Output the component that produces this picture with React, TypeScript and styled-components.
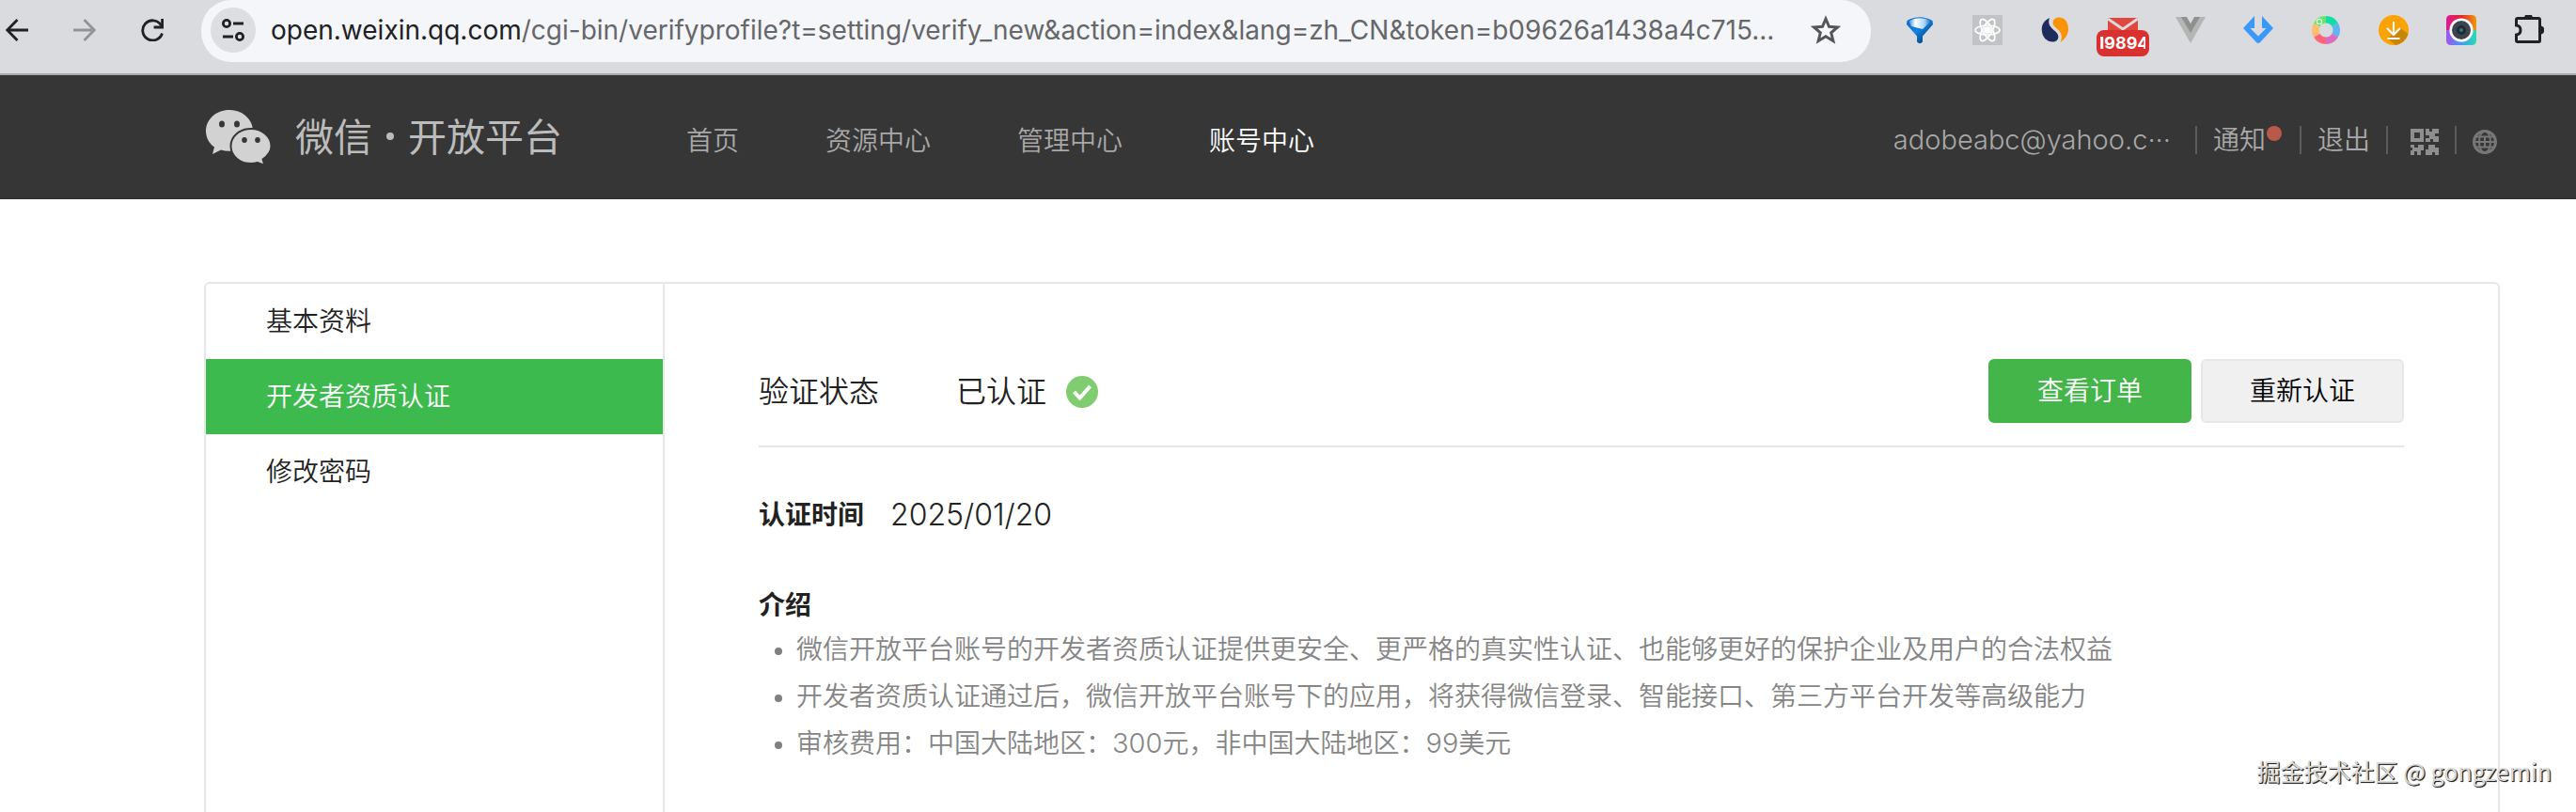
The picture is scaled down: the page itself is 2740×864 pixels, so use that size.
import React from 'react';
import styled, { createGlobalStyle } from 'styled-components';

const Global = createGlobalStyle`
  * { box-sizing: border-box; }
  html, body, #root { height: 100%; }
  body {
    margin: 0;
    background: #fff;
    font-family: Inter, "Noto Sans CJK SC", sans-serif;
    font-size: 28px;
    color: #222;
    overflow: hidden;
  }
  button, input { font: inherit; }
`;

const Page = styled.div`
  position: relative;
  min-height: 100%;
  display: flex;
  flex-direction: column;
`;

const Toolbar = styled.div`
  flex: none;
  height: 80px;
  display: flex;
  align-items: flex-start;
  background: #dadbdf;
  border-bottom: 2px solid #a9abae;
`;

const NavButtons = styled.div`
  display: flex;
  gap: 48px;
  padding: 20px 40px 0 6px;
`;

const IconButton = styled.button<{ $size?: number }>`
  display: block;
  flex: none;
  padding: 0;
  border: 0;
  background: none;
  width: ${(p) => p.$size ?? 24}px;
  height: ${(p) => p.$size ?? 24}px;
  svg { display: block; width: 100%; height: 100%; }
`;

const AddressBar = styled.div`
  flex: 1;
  min-width: 0;
  height: 66px;
  display: flex;
  align-items: center;
  padding: 0 32px 2px 10px;
  gap: 16px;
  background: #f5f6f9;
  border-radius: 32px;
`;

const SiteInfo = styled.button`
  flex: none;
  width: 48px;
  height: 48px;
  padding: 11px;
  border: 0;
  border-radius: 50%;
  background: #dddee1;
  svg { display: block; width: 26px; height: 26px; }
`;

const Url = styled.a`
  flex: 1;
  min-width: 0;
  white-space: nowrap;
  overflow: hidden;
  text-overflow: ellipsis;
  text-decoration: none;
  font-family: Inter, sans-serif;
  font-size: 28px;
  line-height: 40px;
  color: #66676a;
  b { font-weight: 400; color: #202124; }
`;

const Extensions = styled.div`
  flex: none;
  display: flex;
  gap: 40px;
  padding: 16px 34px 0 36px;
`;

const Badge = styled.span`
  position: absolute;
  left: -4px;
  top: 16px;
  width: 56px;
  height: 28px;
  padding: 0 4px;
  border-radius: 8px;
  background: #d93030;
  color: #fff;
  font: 700 18px/28px Inter, sans-serif;
`;

const BadgeText = styled.span`
  display: flex;
  justify-content: center;
  overflow: hidden;
`;

const BadgeHolder = styled.button`
  position: relative;
  flex: none;
  width: 48px;
  height: 32px;
  margin: 0 -8px;
  padding: 0 8px;
  border: 0;
  background: none;
  svg { display: block; }
`;

const Header = styled.header`
  flex: none;
  height: 132px;
  display: flex;
  align-items: center;
  padding: 0 84px 0 218px;
  background: #363636;
  color: #a8a8a8;
  font-weight: 350;
`;

const Brand = styled.a`
  display: flex;
  align-items: center;
  gap: 24px;
  color: #bcbcbc;
  font-size: 41px;
  font-weight: 400;
  line-height: 56px;
  white-space: nowrap;
  text-decoration: none;
  svg { display: block; width: 72px; height: 60px; }
`;

const Dot = styled.i`
  display: inline-block;
  width: 8px;
  height: 8px;
  margin: 0 15px;
  border-radius: 50%;
  background: #bcbcbc;
  vertical-align: 12px;
`;

const MainNav = styled.nav`
  display: flex;
  gap: 92px;
  margin-left: 132px;
  padding-top: 8px;
`;

const NavLink = styled.a<{ $active?: boolean }>`
  color: ${(p) => (p.$active ? '#fff' : '#a8a8a8')};
  line-height: 40px;
  text-decoration: none;
`;

const Account = styled.div`
  margin-left: auto;
  display: flex;
  align-items: center;
  padding-top: 6px;
  line-height: 40px;
`;

const Email = styled.span`
  font-size: 29px;
  font-weight: 300;
  margin-right: 26px;
`;

const Entry = styled.a`
  position: relative;
  display: flex;
  align-items: center;
  padding: 0 17px;
  height: 30px;
  border-left: 2px solid #5c5c5c;
  color: inherit;
  text-decoration: none;
  svg { display: block; }
`;

const NoticeEntry = styled(Entry)`
  padding-right: 36px;
`;

const QrEntry = styled(Entry)`
  padding: 4px 17px 0 24px;
`;

const LangEntry = styled(Entry)`
  padding: 4px 0 0 17px;
`;

const Unread = styled.i`
  position: absolute;
  right: 19px;
  top: 0;
  width: 16px;
  height: 16px;
  border-radius: 50%;
  background: #b8594a;
`;

const Panel = styled.main`
  flex: 1;
  display: flex;
  margin: 88px 81px 0 217px;
  border: 2px solid #e7e7e7;
  border-bottom: 0;
  border-radius: 6px 6px 0 0;
`;

const Side = styled.nav`
  flex: none;
  width: 488px;
  border-right: 2px solid #e7e7e7;
`;

const SideLink = styled.a<{ $active?: boolean }>`
  display: block;
  padding-left: 64px;
  line-height: 80px;
  font-weight: 350;
  text-decoration: none;
  color: ${(p) => (p.$active ? '#fff' : '#222')};
  background: ${(p) => (p.$active ? '#3dba4e' : 'none')};
`;

const Content = styled.section`
  flex: 1;
  min-width: 0;
  padding: 80px 100px 0;
`;

const StatusRow = styled.div`
  display: flex;
  align-items: center;
  padding-bottom: 24px;
  border-bottom: 2px solid #e7e7e7;
  font-size: 32px;
  font-weight: 350;
  line-height: 68px;
  svg { display: block; margin: 2px 0 0 20px; }
`;

const StatusText = styled.span`
  padding-top: 2px;
  line-height: 66px;
`;

const StatusValue = styled(StatusText)`
  margin-left: 82px;
`;

const Actions = styled.div`
  margin-left: auto;
  display: flex;
  gap: 10px;
`;

const ActionButton = styled.button<{ $primary?: boolean }>`
  width: 216px;
  height: 68px;
  padding: 0;
  font-size: 28px;
  line-height: 64px;
  border-radius: 6px;
  border: 2px solid ${(p) => (p.$primary ? '#44b549' : '#e7e7e7')};
  background: ${(p) => (p.$primary ? '#44b549' : '#f0f0f0')};
  color: ${(p) => (p.$primary ? '#fff' : '#000')};
`;

const TimeRow = styled.div`
  display: flex;
  gap: 28px;
  margin-top: 52px;
  line-height: 40px;
  b { font-weight: 700; }
  time { font-size: 32px; font-weight: 300; }
`;

const Title = styled.h2`
  margin: 56px 0 0;
  font-size: 28px;
  font-weight: 700;
  line-height: 40px;
`;

const Notes = styled.ul`
  margin: 2px 0 0;
  padding: 0;
  list-style: none;
  line-height: 50px;
  font-weight: 350;
  color: #858585;
  white-space: nowrap;
`;

const Note = styled.li`
  display: flex;
  align-items: center;
  gap: 15px;
  height: 50px;
  padding-left: 17px;
  &::before {
    content: "";
    width: 8px;
    height: 8px;
    margin-top: 4px;
    border-radius: 50%;
    background: #808080;
  }
`;

const Amount = styled.span`
  font-size: 29px;
  font-weight: 300;
`;

const Watermark = styled.div`
  position: absolute;
  right: 26px;
  bottom: 24px;
  font-family: "Noto Sans CJK SC", sans-serif;
  font-size: 25px;
  line-height: 40px;
  color: #dcdcdc;
  text-shadow: 1px 1px 1px #222, 1px 1px 0 #444;
`;

const Arrow = ({ back }: { back?: boolean }) => (
  <svg viewBox="0 0 24 24" fill="none" stroke={back ? '#202124' : '#929397'} strokeWidth="2.8">
    {back ? <path d="M24 12H2M12.500 1 1.800 12l10.700 11" /> : <path d="M0 12h22M11.500 1l10.700 11-10.700 11" />}
  </svg>
);

export default function App() {
  return (
    <Page>
      <Global />
      <Toolbar>
        <NavButtons>
          <IconButton aria-label="后退"><Arrow back /></IconButton>
          <IconButton aria-label="前进"><Arrow /></IconButton>
          <IconButton aria-label="刷新">
            <svg viewBox="0 0 24 24" fill="none" stroke="#202124" strokeWidth="2.8">
              <path d="M22.500 15.500A10.600 10.600 0 1 1 21 6.200L22.500 8.500" />
              <path d="M22.600 0v9h-9" />
            </svg>
          </IconButton>
        </NavButtons>
        <AddressBar>
          <SiteInfo aria-label="网站信息">
            <svg viewBox="0 0 26 26" fill="none" stroke="#202124" strokeWidth="2.800">
              <circle cx="6" cy="6" r="3.600" /><path d="M13 6h11M2 20h11" /><circle cx="20" cy="20" r="3.600" />
            </svg>
          </SiteInfo>
          <Url href="#"><b>open.weixin.qq.com</b>/cgi-bin/verifyprofile?t=setting/verify_new&amp;action=index&amp;lang=zh_CN&amp;token=b09626a1438a4c715...</Url>
          <IconButton $size={32} aria-label="收藏">
            <svg viewBox="0 0 32 32" fill="none" stroke="#55565a" strokeWidth="3">
              <path d="M16 4l3.500 8.300 9 .7-6.800 5.800 2.200 8.700-7.900-4.700-7.900 4.700 2.200-8.700L3.500 13l9-.7z" />
            </svg>
          </IconButton>
        </AddressBar>
        <Extensions>
          <IconButton $size={32} aria-label="扩展 1">
            <svg viewBox="0 0 32 32">
              <defs>
                <linearGradient id="gem" x1="0" x2="1" y1="0" y2="1"><stop offset="0" stopColor="#0a5ec0" /><stop offset=".45" stopColor="#1083e2" /><stop offset="1" stopColor="#032a5c" /></linearGradient>
                <linearGradient id="shine" x1="0" x2="1" y1="0" y2="0"><stop offset="0" stopColor="#1d86dc" /><stop offset=".3" stopColor="#fff" /><stop offset=".7" stopColor="#a9d6fa" /><stop offset="1" stopColor="#1667b8" /></linearGradient>
              </defs>
              <path d="M2.500 6Q16-1.500 29.500 6L30 10 19 22.500v6q-3 3.500-6 0v-6L2 10z" fill="url(#gem)" />
              <path d="M4 6.500Q16 0 28 6.500L19 15 7 12z" fill="url(#shine)" />
            </svg>
          </IconButton>
          <IconButton $size={32} aria-label="扩展 2">
            <svg viewBox="0 0 32 32" fill="none" stroke="#fff" strokeWidth="1.700">
              <path d="M0 0h32v32H0z" fill="#c2c3c6" stroke="none" />
              <ellipse cx="16" cy="16" rx="13" ry="5" /><ellipse cx="16" cy="16" rx="13" ry="5" transform="rotate(60 16 16)" /><ellipse cx="16" cy="16" rx="13" ry="5" transform="rotate(120 16 16)" />
              <circle cx="16" cy="16" r="3" fill="#fff" />
            </svg>
          </IconButton>
          <IconButton $size={32} aria-label="扩展 3">
            <svg viewBox="0 0 32 32">
              <path d="M10 3C4 6 1.500 10.500 1.800 16c.3 8 6 13 12.500 12.500 6-.8 6.500-7 2.500-10.500C11.500 13.500 7.500 10 10 3z" fill="#1f2b5b" />
              <path d="M14 6c2-5.500 16-5.500 16 9 0 6-4 11-8.500 14C24 24 23 19 19 15.500 15.500 12.500 12.500 10 14 6z" fill="#fb9307" />
            </svg>
          </IconButton>
          <BadgeHolder aria-label="邮件">
            <svg width="32" height="32" viewBox="0 0 32 32"><path d="M0 3h32v14H0z" fill="#e0483e" /><path d="M0 4l16 11L32 4" fill="none" stroke="#dadbdf" strokeWidth="3" /></svg>
            <Badge><BadgeText>19894</BadgeText></Badge>
          </BadgeHolder>
          <IconButton $size={32} aria-label="扩展 5">
            <svg viewBox="0 0 32 32"><path d="M0 2h32L16 30z" fill="#b4b6b6" /><path d="M6 2h6l4 7 4-7h6L16 19z" fill="#8f918f" /><path d="M12 2h8l-4 7z" fill="#dadbdf" /></svg>
          </IconButton>
          <IconButton $size={32} aria-label="扩展 6">
            <svg viewBox="0 0 32 32"><path d="M12 1v13H7.500l8.500 8.500 8.500-8.500H20V1l12 13-14 15q-2 2-4 0L0 14z" fill="#3b98fb" /></svg>
          </IconButton>
          <IconButton $size={32} aria-label="扩展 7">
            <svg viewBox="0 0 32 32" fill="none" strokeWidth="7.500">
              <path d="M16 4.800A11.200 11.200 0 0 1 25.700 10.400" stroke="#12dca8" /><path d="M25.700 10.400A11.200 11.200 0 0 1 25.700 21.600" stroke="#5fb4f2" />
              <path d="M25.700 21.600A11.200 11.200 0 0 1 16 27.200" stroke="#dc6cc0" /><path d="M16 27.200A11.200 11.200 0 0 1 6.300 21.600" stroke="#ff6478" />
              <path d="M6.300 21.600A11.200 11.200 0 0 1 6.300 10.400" stroke="#fbbd72" /><path d="M6.300 10.400A11.200 11.200 0 0 1 16 4.800" stroke="#66e56c" />
              <circle cx="9" cy="7" r="2.600" stroke="#e9ffe0" strokeWidth="1.200" />
            </svg>
          </IconButton>
          <IconButton $size={32} aria-label="下载">
            <svg viewBox="0 0 32 32"><circle cx="16" cy="16" r="16" fill="#fba305" /><path d="M23.500 14l8 6A16 16 0 0 1 18 31.900L9.500 25z" fill="#c78608" /><path d="M16 7v13.500M9 14l7 7 7-7M9.500 25h13" fill="none" stroke="#fff" strokeWidth="2" /></svg>
          </IconButton>
          <IconButton $size={32} aria-label="截图">
            <svg viewBox="0 0 32 32">
              <defs>
                <linearGradient id="cam" x1="0" x2="1" y1="0" y2="0"><stop offset="0" stopColor="#e0189a" /><stop offset=".5" stopColor="#e02828" /><stop offset="1" stopColor="#f09a10" /></linearGradient>
                <linearGradient id="cam2" x1="0" x2="1" y1="0" y2="0"><stop offset="0" stopColor="#a552ee" /><stop offset=".5" stopColor="#3d9cf4" /><stop offset="1" stopColor="#2ddcb0" /></linearGradient>
              </defs>
              <path d="M0 16V5q0-5 5-5h22q5 0 5 5v11z" fill="url(#cam)" /><path d="M0 16v11q0 5 5 5h22q5 0 5-5V16z" fill="url(#cam2)" />
              <circle cx="16" cy="16" r="11.300" fill="#3c4450" stroke="#fff" strokeWidth="2.600" /><circle cx="16" cy="16" r="5" fill="#222b35" /><circle cx="16" cy="16" r="2" fill="#2a7c78" />
            </svg>
          </IconButton>
          <IconButton $size={32} aria-label="扩展程序">
            <svg viewBox="0 0 32 32"><path d="M4 3.500h22q1.500 0 1.500 1.500v22.500q0 1-1.500 1H4q-1.500 0-1.500-1.500v-6q4.500-.5 4.500-5t-4.500-5V5q0-1.500 1.500-1.500z" fill="none" stroke="#202124" strokeWidth="3" /><path d="M11 3a4.500 4.500 0 0 1 9 0zM28 11.500a4.500 4.500 0 0 1 0 9z" fill="#202124" /></svg>
          </IconButton>
        </Extensions>
      </Toolbar>

      <Header>
        <Brand href="#">
          <svg viewBox="0 0 72 60">
            <path d="M26 1C12 1 1 11 1 23.500c0 7 3.500 13 9 17L8 48l9-4.500q4 1.300 9 1.300c14 0 25-9 25-21.300S40 1 26 1z" fill="#d2d2d2" />
            <path d="M49 21c-12.500 0-21.500 8.500-21.500 18.500S36.500 58 49 58q4 0 7-1l7.500 3-2-6.500c5-3.500 9-8.500 9-14C70.500 29.500 61 21 49 21z" fill="#d2d2d2" stroke="#363636" strokeWidth="2" />
            <g fill="#363636"><ellipse cx="18" cy="16" rx="3" ry="3.500" /><ellipse cx="34" cy="16" rx="3" ry="3.500" /><ellipse cx="42" cy="33" rx="2.800" ry="3" /><ellipse cx="56" cy="33" rx="2.800" ry="3" /></g>
          </svg>
          <span>微信<Dot />开放平台</span>
        </Brand>
        <MainNav>
          <NavLink href="#">首页</NavLink>
          <NavLink href="#">资源中心</NavLink>
          <NavLink href="#">管理中心</NavLink>
          <NavLink href="#" $active>账号中心</NavLink>
        </MainNav>
        <Account>
          <Email>adobeabc@yahoo.c···</Email>
          <NoticeEntry href="#">通知<Unread /></NoticeEntry>
          <Entry href="#">退出</Entry>
          <QrEntry href="#" aria-label="二维码">
            <svg width="30" height="28" viewBox="0 0 30 28" fill="#8e8e8e">
              <path fillRule="evenodd" d="M0 0h14v14H0zM4 4v6h6V4z" />
              <path d="M16 0h4v3h3V0h7v5h-4v3h4v6h-6v-3h-3v3h-5v-4h4V7h-4zM0 17h4v3h4v-3h6v6h-3v5H7v-4H4v4H0v-5h2v-3H0zM19 17h7v3h4v8h-4v-3h-3v3h-7v-6h3z" />
            </svg>
          </QrEntry>
          <LangEntry href="#" aria-label="语言">
            <svg width="26" height="26" viewBox="0 0 26 26" fill="none" stroke="#777" strokeWidth="2">
              <circle cx="13" cy="13" r="11.500" strokeWidth="3" /><ellipse cx="13" cy="13" rx="6" ry="11.500" /><path d="M13 7v12M2 13h22M4 7.500h18M4 18.500h18" />
            </svg>
          </LangEntry>
        </Account>
      </Header>

      <Panel>
        <Side>
          <SideLink href="#">基本资料</SideLink>
          <SideLink href="#" $active>开发者资质认证</SideLink>
          <SideLink href="#">修改密码</SideLink>
        </Side>
        <Content>
          <StatusRow>
            <StatusText>验证状态</StatusText>
            <StatusValue>已认证</StatusValue>
            <svg width="36" height="36" viewBox="0 0 36 36"><circle cx="18" cy="18" r="17" fill="#80cc70" /><path d="M9.500 18l6 6.500L26.500 12" fill="none" stroke="#fff" strokeWidth="4" /></svg>
            <Actions>
              <ActionButton $primary>查看订单</ActionButton>
              <ActionButton>重新认证</ActionButton>
            </Actions>
          </StatusRow>
          <TimeRow><b>认证时间</b><time>2025/01/20</time></TimeRow>
          <Title>介绍</Title>
          <Notes>
            <Note>微信开放平台账号的开发者资质认证提供更安全、更严格的真实性认证、也能够更好的保护企业及用户的合法权益</Note>
            <Note>开发者资质认证通过后，微信开放平台账号下的应用，将获得微信登录、智能接口、第三方平台开发等高级能力</Note>
            <Note><span>审核费用：中国大陆地区：<Amount>300</Amount>元，非中国大陆地区：<Amount>99</Amount>美元</span></Note>
          </Notes>
        </Content>
      </Panel>
      <Watermark>掘金技术社区 @ gongzemin</Watermark>
    </Page>
  );
}
